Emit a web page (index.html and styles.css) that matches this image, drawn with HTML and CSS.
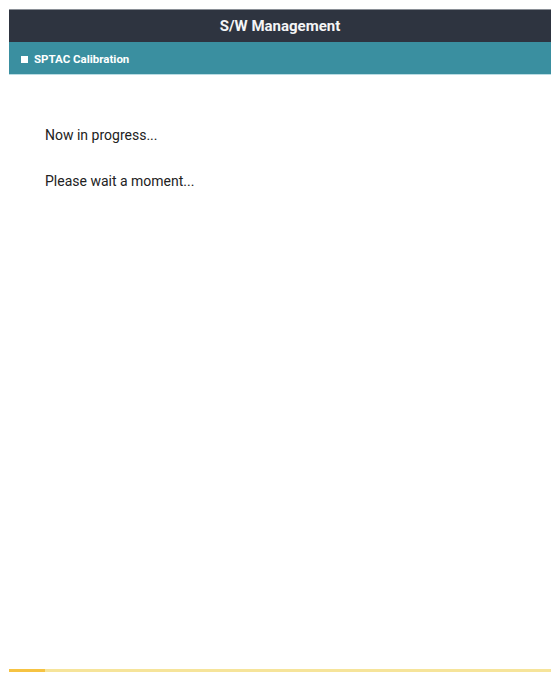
FILE: index.html
```html
<!DOCTYPE html>
<html>
<head>
<meta charset="utf-8">
<link rel="stylesheet" href="styles.css">
</head>
<body>
<div class="frame">
  <div class="title">S/W Management</div>
  <div class="sub"><span class="sq"></span><span>SPTAC Calibration</span></div>
  <div class="content">
    <p class="line">Now in progress...</p>
    <p class="line">Please wait a moment...</p>
  </div>
  <div class="progress"><div class="fill" style="width:36px"></div></div>
</div>
</body>
</html>
```
FILE: styles.css
```css
html, body { margin: 0; padding: 0; background: #fff; }
body { font-family: Roboto, "Liberation Sans", sans-serif; }
.frame {
  box-sizing: border-box;
  width: 542px;
  margin: 0 0 0 9px;
  padding-top: 9px;
  height: 672px;
  display: flex;
  flex-direction: column;
}
.title {
  height: 32px;
  border-top: 1px solid #8a8f96;
  background: #2e3440;
  color: #f4f5f6;
  font-weight: 700;
  font-size: 15px;
  display: flex;
  align-items: center;
  justify-content: center;
}
.sub {
  height: 32px;
  background: #3a8fa0;
  border-bottom: 1px solid #b9dce3;
  color: #fff;
  font-weight: 700;
  font-size: 11.5px;
  display: flex;
  align-items: center;
  padding: 2px 0 0 12px;
  box-sizing: border-box;
  height: 33px;
  gap: 6px;
}
.sq { width: 7px; height: 7px; background: #fff; display: inline-block; }
.content {
  flex: 1;
  padding: 51px 0 0 36px;
}
.line {
  margin: 0 0 28px 0;
  font-size: 14px;
  color: #222;
  line-height: 18px;
}
.progress {
  height: 3px;
  background: #f6e49a;
}
.fill { height: 3px; background: #f6c342; }
```
